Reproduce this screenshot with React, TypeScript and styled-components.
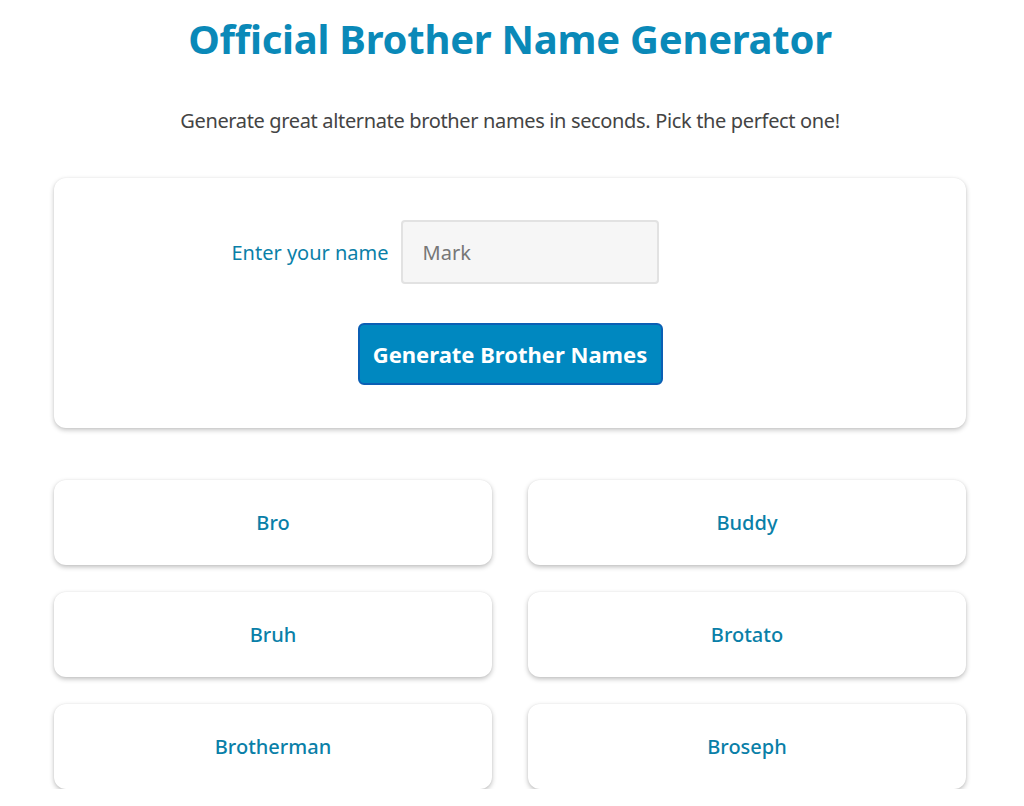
import React from "react";
import styled, { createGlobalStyle } from "styled-components";

const Global = createGlobalStyle`
  html, body { margin: 0; padding: 0; background: #ffffff; }
  body { font-family: "Noto Sans", "Open Sans", sans-serif; }
  * { box-sizing: border-box; }
`;

const Page = styled.main`
  width: 912px;
  margin: 0 58px 0 54px;
  padding-top: 13px;
  display: flex;
  flex-direction: column;
  align-items: stretch;
`;

const Title = styled.h1`
  margin: 0;
  text-align: center;
  font-size: 40px;
  line-height: 52px;
  font-weight: 700;
  color: #0a89b8;
  letter-spacing: -0.25px;
`;

const Subtitle = styled.p`
  margin: 43px 0 0;
  text-align: center;
  font-size: 20px;
  line-height: 26px;
  color: #444444;
  letter-spacing: -0.35px;
`;

const Card = styled.section`
  margin-top: 44px;
  height: 250px;
  background: #fff;
  border-radius: 12px;
  box-shadow: 0 2px 5px rgba(0, 0, 0, 0.24), 0 0 2px rgba(0, 0, 0, 0.06);
  display: flex;
  flex-direction: column;
  align-items: center;
  padding-top: 42px;
`;

const FieldRow = styled.div`
  display: flex;
  align-items: center;
  gap: 12px;
  margin-right: 130px;
`;

const Label = styled.label`
  font-size: 20px;
  color: #0a7fa8;
`;

const Input = styled.input`
  width: 258px;
  height: 64px;
  background: #f6f6f6;
  border: 2px solid #e2e2e2;
  border-radius: 4px;
  padding: 0 20px;
  font-family: inherit;
  font-size: 20px;
  color: #333;
  outline: none;
  &::placeholder { color: #777777; }
`;

const Button = styled.button`
  margin-top: 39px;
  width: 305px;
  height: 62px;
  background: #0088c0;
  border: 2px solid #0b5fb4;
  border-radius: 6px;
  color: #ffffff;
  font-family: inherit;
  font-size: 22px;
  font-weight: 700;
  cursor: pointer;
`;

const Grid = styled.div`
  margin-top: 52px;
  display: grid;
  grid-template-columns: 1fr 1fr;
  column-gap: 36px;
  row-gap: 27px;
`;

const NameCard = styled.div`
  height: 85px;
  border-radius: 12px;
  background: #fff;
  box-shadow: 0 2px 5px rgba(0, 0, 0, 0.26), 0 0 2px rgba(0, 0, 0, 0.06);
  display: flex;
  align-items: center;
  justify-content: center;
  font-size: 20px;
  font-weight: 500;
  color: #0a7fa8;
`;

const names = ["Bro", "Buddy", "Bruh", "Brotato", "Brotherman", "Broseph"];

export default function App() {
  return (
    <>
      <Global />
      <Page>
        <Title>Official Brother Name Generator</Title>
        <Subtitle>Generate great alternate brother names in seconds. Pick the perfect one!</Subtitle>
        <Card>
          <FieldRow>
            <Label htmlFor="name">Enter your name</Label>
            <Input id="name" placeholder="Mark" />
          </FieldRow>
          <Button>Generate Brother Names</Button>
        </Card>
        <Grid>
          {names.map((n) => (
            <NameCard key={n}>{n}</NameCard>
          ))}
        </Grid>
      </Page>
    </>
  );
}
